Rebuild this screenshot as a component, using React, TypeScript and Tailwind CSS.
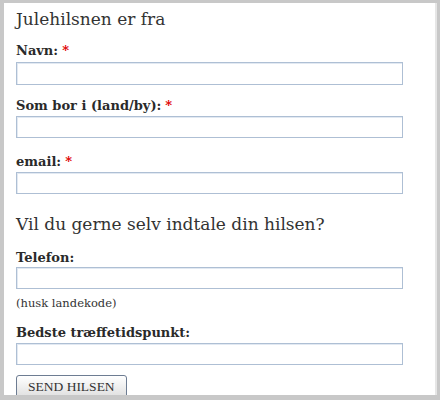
import React from "react";

const serif = { fontFamily: '"DejaVu Serif", "Liberation Serif", serif' };

function Field({ mt, imt, h = 22, label, req }: { mt: string; imt: string; h?: number; label: string; req?: boolean }) {
  return (
    <>
      <div className={`${mt} text-[13px] leading-[16px] font-bold text-[#2a2a2a]`}>
        {label}
        {req && <span className="ml-[4px] text-[#e00000]">*</span>}
      </div>
      <div
        className={`${imt} w-[387px] ${h === 23 ? "h-[23px]" : "h-[22px]"} border border-[#aebfd4] bg-white shadow-[inset_1px_1px_0_#e2e9f2]`}
      />
    </>
  );
}

export default function App() {
  return (
    <div className="w-[440px] h-[400px] bg-[#c8c8c8] overflow-hidden">
      <div
        className="ml-[4px] mt-[3px] w-[433px] h-[392px] bg-white border-r-2 border-[#e6e6e6] pl-[12px] overflow-hidden"
        style={serif}
      >
        <div className="mt-[4px] text-[17px] leading-[24px] text-[#333]">Julehilsnen er fra</div>
        <Field mt="mt-[12px]" imt="mt-[3px]" h={23} label="Navn:" req />
        <Field mt="mt-[13px]" imt="mt-[2px]" label="Som bor i (land/by):" req />
        <Field mt="mt-[16px]" imt="mt-[2px]" label="email:" req />
        <div className="mt-[18px] text-[17px] leading-[24px] text-[#333]">Vil du gerne selv indtale din hilsen?</div>
        <Field mt="mt-[14px]" imt="mt-[1px]" label="Telefon:" />
        <div className="mt-[7px] text-[11.5px] leading-[14px] text-[#333]">(husk landekode)</div>
        <Field mt="mt-[15px]" imt="mt-[2px]" label="Bedste træffetidspunkt:" />
        <button
          className="mt-[10px] block h-[24px] px-[11px] rounded-[3px] border border-[#6d7c92] bg-gradient-to-b from-white to-[#dedede] text-[13.5px] leading-[20px] text-[#333]"
          style={{ fontFamily: '"Liberation Serif", serif' }}
        >
          SEND HILSEN
        </button>
      </div>
    </div>
  );
}
